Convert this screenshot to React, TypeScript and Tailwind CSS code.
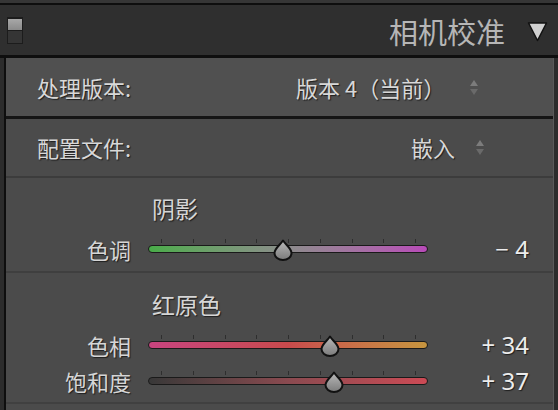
import React from 'react'

const font = { fontFamily: '"Noto Sans CJK SC", "Noto Sans", sans-serif' }

function Spinner({ gap }: { gap: string }) {
  return (
    <svg width="10" height="17" viewBox="0 0 10 17" className={gap}>
      <path d="M5 1 L9 7 L1 7 Z" fill="#7c7c7c" />
      <path d="M1 10 L9 10 L5 16 Z" fill="#6a6a6a" />
    </svg>
  )
}

function Thumb() {
  return (
    <svg width="20" height="22" viewBox="0 0 20 22">
      <defs>
        <linearGradient id="thumbFill" x1="0" y1="0" x2="0" y2="1">
          <stop offset="0" stopColor="#b9b9b9" />
          <stop offset="1" stopColor="#7b7b7b" />
        </linearGradient>
      </defs>
      <path
        d="M10 1.5 C12.5 5.5 18.5 9.5 18.5 14 A8.5 7 0 0 1 1.5 14 C1.5 9.5 7.5 5.5 10 1.5 Z"
        fill="url(#thumbFill)"
        stroke="#111"
        strokeWidth="2"
        strokeLinejoin="round"
      />
    </svg>
  )
}

type SliderProps = {
  label: string
  value: number
  track: string
}

function SliderRow({ label, value, track }: SliderProps) {
  const center = 140 + value * 1.24
  const shown = value < 0 ? `− ${Math.abs(value)}` : `+ ${value}`
  return (
    <div className="flex items-center h-[36px]">
      <div className="w-[125px] text-right text-[22px] text-[#d6d6d6] [text-shadow:1px_1px_1px_#1e1e1e] leading-none">
        {label}
      </div>
      <div className="relative w-[280px] h-[36px] ml-[17px]">
        <div className="flex justify-between pl-[13px] pr-[12px] mt-[8px] h-[5px]">
          {Array.from({ length: 9 }).map((_, i) => (
            <div key={i} className="w-[1px] h-[4px] bg-[#2e2e2e]" />
          ))}
        </div>
        <div className={`mt-[1px] h-[8px] rounded-full border border-[#1a1a1a] ${track}`} />
        <div className="absolute top-[8px]" style={{ left: center - 10 }}>
          <Thumb />
        </div>
      </div>
      <div
        className="flex-1 text-right pr-[24px] text-[24px] text-[#ececec] [text-shadow:1px_1px_1px_#1e1e1e] leading-none"
        style={{ fontFamily: '"Noto Sans", sans-serif' }}
      >
        {shown}
      </div>
    </div>
  )
}

export default function App() {
  return (
    <div className="w-[558px] h-[410px] bg-[#2c2c2c] overflow-hidden" style={font}>
      <div className="h-[3px] bg-[#363636] border-b-[2px] border-[#0e0e0e] box-content" />
      <div className="h-[50px] bg-[#2f2f2f] flex items-center pl-[7px] pr-[10px] border-b-[3px] border-[#0e0e0e] box-content">
        <div className="w-[16px] h-[27px] bg-[#1c1c1c] p-[1px] pt-[2px] flex flex-col">
          <div className="h-[11px] bg-linear-to-b from-[#a8a8a8] to-[#8a8a8a]" />
          <div className="flex-1 bg-[#353535] mt-[1px]" />
        </div>
        <div className="flex-1" />
        <div className="text-[29px] text-[#b6b6b6] leading-none mr-[22px] mt-[2px]">相机校准</div>
        <svg width="21" height="21" viewBox="0 0 21 21" className="mt-[3px]">
          <path d="M1.5 2 L19.5 2 L10.5 19.5 Z" fill="#d0d0d0" stroke="#111" strokeWidth="1.5" strokeLinejoin="round" />
        </svg>
      </div>
      <div className="ml-[4px] border-l-[2px] border-[#0e0e0e] border-r border-r-[#5a5a5a] mr-[4px] bg-[#4b4b4b] h-[352px]">
        <div className="h-[58px] bg-[#505050] border-b-[3px] border-[#151515] box-content flex items-center text-[22px] text-[#d8d8d8] [text-shadow:1px_1px_1px_#1e1e1e]">
          <div className="w-[260px] pl-[31px]">处理版本:</div>
          <div className="ml-[30px] flex items-center">
            <span>版本 4（当前）</span>
            <Spinner gap="ml-[24px]" />
          </div>
        </div>
        <div className="h-[57px] flex items-center text-[22px] text-[#d8d8d8] [text-shadow:1px_1px_1px_#1e1e1e] border-b-[2px] border-[#3c3c3c] box-content">
          <div className="flex-1 pl-[31px]">配置文件:</div>
          <div className="flex items-center mr-[68px]">
            <span>嵌入</span>
            <Spinner gap="ml-[20px]" />
          </div>
        </div>
        <div className="h-[95px] pt-[15px] border-b-[2px] border-[#3f3f3f] box-border">
          <div className="h-[30px] flex items-center pl-[146px] text-[23px] text-[#d6d6d6] [text-shadow:1px_1px_1px_#1e1e1e]">阴影</div>
          <div className="mt-[8px]">
            <SliderRow label="色调" value={-4} track="bg-linear-to-r from-[#48ac48] via-[#8c8c8c] to-[#b84ab8]" />
          </div>
        </div>
        <div className="h-[131px] pt-[16px] border-b-[2px] border-[#404040] box-border">
          <div className="h-[30px] flex items-center pl-[146px] text-[23px] text-[#d6d6d6] [text-shadow:1px_1px_1px_#1e1e1e]">红原色</div>
          <div className="mt-[8px]">
            <SliderRow label="色相" value={34} track="bg-linear-to-r from-[#c8447f] via-[#c84a4c] to-[#c6953e]" />
            <SliderRow label="饱和度" value={37} track="bg-linear-to-r from-[#383838] via-[#8a4a50] to-[#cc4a55]" />
          </div>
        </div>
      </div>
    </div>
  )
}
